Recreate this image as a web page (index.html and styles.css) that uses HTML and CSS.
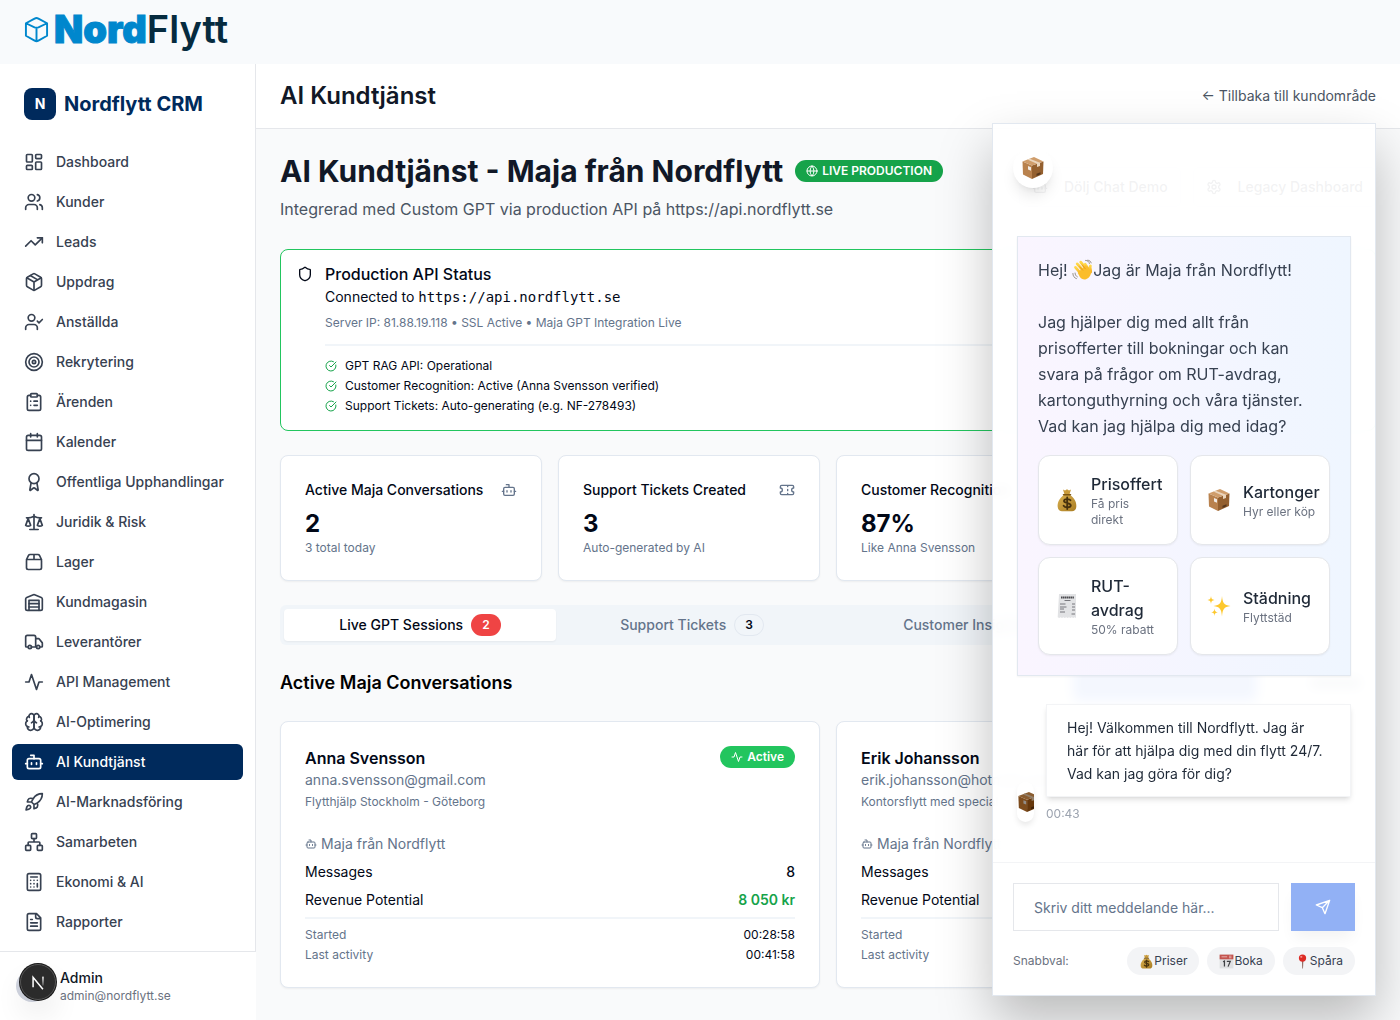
FILE: index.html
```html
<!DOCTYPE html>
<html lang="sv">
<head>
<meta charset="utf-8">
<meta name="viewport" content="width=device-width, initial-scale=1">
<title>AI Kundtjänst – Nordflytt CRM</title>
<link rel="stylesheet" href="styles.css">
</head>
<body>
<svg class="sprite" aria-hidden="true">
  <defs>
    <linearGradient id="bag" x1="0" y1="0" x2="1" y2="1"><stop offset="0" stop-color="#d9b04f"/><stop offset="1" stop-color="#a97c22"/></linearGradient>
    <linearGradient id="hand" x1="0" y1="0" x2="0" y2="1"><stop offset="0" stop-color="#ffd84a"/><stop offset="1" stop-color="#f5ab1e"/></linearGradient>
    <linearGradient id="nfade" x1="0" y1="0" x2="0" y2="1"><stop offset="0" stop-color="#fff"/><stop offset="1" stop-color="#fff" stop-opacity=".2"/></linearGradient>
    <symbol id="i-dashboard" viewBox="0 0 24 24"><rect width="7" height="9" x="3" y="3" rx="1"/><rect width="7" height="5" x="14" y="3" rx="1"/><rect width="7" height="9" x="14" y="12" rx="1"/><rect width="7" height="5" x="3" y="16" rx="1"/></symbol>
    <symbol id="i-users" viewBox="0 0 24 24"><path d="M16 21v-2a4 4 0 0 0-4-4H6a4 4 0 0 0-4 4v2"/><circle cx="9" cy="7" r="4"/><path d="M22 21v-2a4 4 0 0 0-3-3.87M16 3.13a4 4 0 0 1 0 7.75"/></symbol>
    <symbol id="i-trend" viewBox="0 0 24 24"><path d="M22 7l-8.5 8.5-5-5L2 17"/><path d="M16 7h6v6"/></symbol>
    <symbol id="i-package" viewBox="0 0 24 24"><path d="M11 21.73a2 2 0 0 0 2 0l7-4A2 2 0 0 0 21 16V8a2 2 0 0 0-1-1.73l-7-4a2 2 0 0 0-2 0l-7 4A2 2 0 0 0 3 8v8a2 2 0 0 0 1 1.73z"/><path d="M12 22V12M3.3 7l8.7 5 8.7-5M7.5 4.27l9 5.15"/></symbol>
    <symbol id="i-usercheck" viewBox="0 0 24 24"><path d="M16 21v-2a4 4 0 0 0-4-4H6a4 4 0 0 0-4 4v2"/><circle cx="9" cy="7" r="4"/><path d="M16 11l2 2 4-4"/></symbol>
    <symbol id="i-target" viewBox="0 0 24 24"><circle cx="12" cy="12" r="10"/><circle cx="12" cy="12" r="6"/><circle cx="12" cy="12" r="2"/></symbol>
    <symbol id="i-clipboard" viewBox="0 0 24 24"><rect width="8" height="4" x="8" y="2" rx="1"/><path d="M16 4h2a2 2 0 0 1 2 2v14a2 2 0 0 1-2 2H6a2 2 0 0 1-2-2V6a2 2 0 0 1 2-2h2M12 11h4M12 16h4M8 11h.01M8 16h.01"/></symbol>
    <symbol id="i-calendar" viewBox="0 0 24 24"><path d="M8 2v4M16 2v4M3 10h18"/><rect width="18" height="18" x="3" y="4" rx="2"/></symbol>
    <symbol id="i-award" viewBox="0 0 24 24"><path d="M15.477 12.89l1.515 8.526a.5.5 0 0 1-.81.47l-3.58-2.687a1 1 0 0 0-1.197 0l-3.586 2.686a.5.5 0 0 1-.81-.469l1.514-8.526"/><circle cx="12" cy="8" r="6"/></symbol>
    <symbol id="i-scale" viewBox="0 0 24 24"><path d="M16 16l3-8 3 8c-.87.65-1.92 1-3 1s-2.13-.35-3-1ZM2 16l3-8 3 8c-.87.65-1.92 1-3 1s-2.13-.35-3-1ZM7 21h10M12 3v18M3 7h2c2 0 5-1 7-2 2 1 5 2 7 2h2"/></symbol>
    <symbol id="i-box" viewBox="0 0 24 24"><path d="M3 9h18v10a2 2 0 0 1-2 2H5a2 2 0 0 1-2-2V9ZM3 9l2.45-4.9A2 2 0 0 1 7.24 3h9.52a2 2 0 0 1 1.8 1.1L21 9M12 3v6"/></symbol>
    <symbol id="i-warehouse" viewBox="0 0 24 24"><path d="M22 8.35V20a2 2 0 0 1-2 2H4a2 2 0 0 1-2-2V8.35A2 2 0 0 1 3.26 6.5l8-3.2a2 2 0 0 1 1.48 0l8 3.2A2 2 0 0 1 22 8.35ZM6 18h12M6 14h12"/><path d="M6 22V10h12v12"/></symbol>
    <symbol id="i-truck" viewBox="0 0 24 24"><path d="M14 18V6a2 2 0 0 0-2-2H4a2 2 0 0 0-2 2v11a1 1 0 0 0 1 1h2M15 18H9M19 18h2a1 1 0 0 0 1-1v-3.65a1 1 0 0 0-.22-.624l-3.48-4.35A1 1 0 0 0 17.52 8H14"/><circle cx="17" cy="18" r="2"/><circle cx="7" cy="18" r="2"/></symbol>
    <symbol id="i-activity" viewBox="0 0 24 24"><path d="M22 12h-4l-3 9L9 3l-3 9H2"/></symbol>
    <symbol id="i-brain" viewBox="0 0 24 24"><path d="M12 5a3 3 0 1 0-5.997.125 4 4 0 0 0-2.526 5.77 4 4 0 0 0 .556 6.588A4 4 0 1 0 12 18Z"/><path d="M12 5a3 3 0 1 1 5.997.125 4 4 0 0 1 2.526 5.77 4 4 0 0 1-.556 6.588A4 4 0 1 1 12 18Z"/><path d="M15 13a4.5 4.5 0 0 1-3-4 4.5 4.5 0 0 1-3 4M17.6 6.5a3 3 0 0 0 .4-1.38M6 5.13a3 3 0 0 0 .4 1.37M3.48 10.9a4 4 0 0 1 .58-.4M19.94 10.5a4 4 0 0 1 .58.4M6 18a4 4 0 0 1-1.97-.52M19.97 17.48A4 4 0 0 1 18 18"/></symbol>
    <symbol id="i-bot" viewBox="0 0 24 24"><path d="M12 8V4H8"/><rect width="16" height="12" x="4" y="8" rx="2"/><path d="M2 14h2M20 14h2M15 13v2M9 13v2"/></symbol>
    <symbol id="i-rocket" viewBox="0 0 24 24"><path d="M4.5 16.5c-1.5 1.26-2 5-2 5s3.74-.5 5-2c.71-.84.7-2.13-.09-2.91a2.18 2.18 0 0 0-2.91-.09zM12 15l-3-3a22 22 0 0 1 2-3.95A12.88 12.88 0 0 1 22 2c0 2.72-.78 7.5-6 11a22.35 22.35 0 0 1-4 2zM9 12H4s.55-3.03 2-4c1.62-1.08 5 0 5 0M12 15v5s3.03-.55 4-2c1.08-1.62 0-5 0-5"/></symbol>
    <symbol id="i-network" viewBox="0 0 24 24"><rect x="16" y="16" width="6" height="6" rx="1"/><rect x="2" y="16" width="6" height="6" rx="1"/><rect x="9" y="2" width="6" height="6" rx="1"/><path d="M5 16v-3a1 1 0 0 1 1-1h12a1 1 0 0 1 1 1v3M12 12V8"/></symbol>
    <symbol id="i-calculator" viewBox="0 0 24 24"><rect width="16" height="20" x="4" y="2" rx="2"/><path d="M8 6h8M16 14v4M16 10h.01M12 10h.01M8 10h.01M12 14h.01M8 14h.01M12 18h.01M8 18h.01"/></symbol>
    <symbol id="i-file" viewBox="0 0 24 24"><path d="M15 2H6a2 2 0 0 0-2 2v16a2 2 0 0 0 2 2h12a2 2 0 0 0 2-2V7ZM14 2v4a2 2 0 0 0 2 2h4M10 9H8M16 13H8M16 17H8"/></symbol>
    <symbol id="i-globe" viewBox="0 0 24 24"><circle cx="12" cy="12" r="10"/><path d="M12 2a14.5 14.5 0 0 0 0 20 14.5 14.5 0 0 0 0-20M2 12h20"/></symbol>
    <symbol id="i-shield" viewBox="0 0 24 24"><path d="M20 13c0 5-3.500 7.500-7.660 8.950a1 1 0 0 1-.67-.01C7.500 20.500 4 18 4 13V6a1 1 0 0 1 1-1c2 0 4.500-1.200 6.240-2.720a1.170 1.170 0 0 1 1.520 0C14.510 3.810 17 5 19 5a1 1 0 0 1 1 1z"/></symbol>
    <symbol id="i-check" viewBox="0 0 24 24"><path d="M21.801 10A10 10 0 1 1 17 3.335M9 11l3 3L22 4"/></symbol>
    <symbol id="i-ticket" viewBox="0 0 24 24"><path d="M2 9a3 3 0 0 1 0 6v2a2 2 0 0 0 2 2h16a2 2 0 0 0 2-2v-2a3 3 0 0 1 0-6V7a2 2 0 0 0-2-2H4a2 2 0 0 0-2 2ZM13 5v2M13 17v2M13 11v2"/></symbol>
    <symbol id="i-gear" viewBox="0 0 24 24"><path d="M12.220 2h-.44a2 2 0 0 0-2 2v.18a2 2 0 0 1-1 1.730l-.43.25a2 2 0 0 1-2 0l-.15-.08a2 2 0 0 0-2.730.73l-.22.38a2 2 0 0 0 .73 2.730l.15.1a2 2 0 0 1 1 1.720v.51a2 2 0 0 1-1 1.740l-.15.09a2 2 0 0 0-.73 2.730l.22.38a2 2 0 0 0 2.730.73l.15-.08a2 2 0 0 1 2 0l.43.25a2 2 0 0 1 1 1.730V20a2 2 0 0 0 2 2h.44a2 2 0 0 0 2-2v-.18a2 2 0 0 1 1-1.730l.43-.25a2 2 0 0 1 2 0l.15.08a2 2 0 0 0 2.730-.73l.22-.39a2 2 0 0 0-.73-2.730l-.15-.08a2 2 0 0 1-1-1.740v-.5a2 2 0 0 1 1-1.740l.15-.09a2 2 0 0 0 .73-2.730l-.22-.38a2 2 0 0 0-2.730-.73l-.15.08a2 2 0 0 1-2 0l-.43-.25a2 2 0 0 1-1-1.730V4a2 2 0 0 0-2-2z"/><circle cx="12" cy="12" r="3"/></symbol>
    <symbol id="i-send" viewBox="0 0 24 24"><path d="M22 2L2 9l9 4 4 9ZM22 2L11 13"/></symbol>
    <symbol id="e-box" viewBox="0 0 24 24"><path d="M1.500 5.500L11 9.500V23L2 18.500Z" fill="#b9824e"/><path d="M11 9.500L22.500 5.500 22 18 11 23Z" fill="#94602f"/><path d="M1.500 5.500L13 1l9.500 4.500L11 9.500Z" fill="#cf9d6b"/><path d="M6.300 3.600L8.700 2.700 19 6.700V10l-3 1V7.800Z" fill="#ead5bd"/><path d="M7 10l3 1.200v3.600L7 13.500Z" fill="#f1ece6"/><path d="M15.500 17.800l4-1.500v2l-4 1.600Z" fill="#56371c"/></symbol>
    <symbol id="e-bag" viewBox="0 0 24 24"><path d="M8 1.500l2 1 2-1.300 2 1.300 2-1-1.500 5h-5Z" fill="#c99b3b"/><path d="M9 7h6c5 3.500 6.800 8 6.300 12-.3 3-2.300 4.200-4.300 4.200H7c-2 0-4-1.200-4.300-4.200C2.200 15 4 10.500 9 7Z" fill="url(#bag)"/><path d="M8.500 6.800h7" stroke="#7a5413" stroke-width="1.500" stroke-linecap="round"/><path d="M15.500 12.300c-1-1.600-6.500-2-6.500.7 0 2.500 6.800 1.500 6.800 4.300 0 2.700-5.800 2.700-7.200.5M12.200 9.500v11.500" fill="none" stroke="#46310d" stroke-width="1.800" stroke-linecap="round"/></symbol>
    <symbol id="e-receipt" viewBox="0 0 24 24"><path d="M4 0h17v24l-1.400-.7-1.400.7-1.400-.7-1.400.7-1.400-.7-1.400.7-1.400-.7-1.400.7-1.400-.7-1.400.7-1.400-.7-1.400.7-1.500-.7Z" fill="#e2e3e5"/><path d="M6 3.500h13" stroke="#4b4b4f" stroke-width="2" stroke-dasharray="1.500 .4"/><path d="M9.500 6.500h6M5 10h5.500M17 10h3M5 13h6.500M17 13h3M5 15h4M17 16h3M5 18h5M16.500 20h3.500" stroke="#77777c" stroke-width="1"/></symbol>
    <symbol id="e-spark" viewBox="0 0 24 24"><path d="M15 2c.7 7 1.700 8.800 8.500 10-6.800 1.200-7.800 3-8.500 10.500-.7-7.500-1.700-9.300-8.500-10.500 6.800-1.200 7.800-3 8.500-10ZM4 2c.3 2.800 1 3.600 3.500 4C5 6.400 4.300 7.200 4 10 3.700 7.200 3 6.400.5 6 3 5.600 3.700 4.800 4 2ZM7.500 14.500c.3 2.700 1 3.400 3.300 3.800-2.300.4-3 1.100-3.300 3.800-.3-2.700-1-3.400-3.300-3.800 2.300-.4 3-1.100 3.300-3.800Z" fill="#fdc82e"/></symbol>
    <symbol id="e-wave" viewBox="0 0 24 24"><g fill="none" stroke="url(#hand)" stroke-width="3.200" stroke-linecap="round"><path d="M4 9l7 8"/><path d="M6 5l8 9"/><path d="M10 3l7 9"/><path d="M15 5.500l4 6"/><path d="M21 7.500c-1 2 .8 5 .2 7"/></g><path d="M6.500 15l9-8.500 5.500 6c2 3-.5 8.500-5 10-3 .8-5.500-.5-7-2.500Z" fill="#fbbd2b"/><path d="M8.500 8l4 4.500M11.500 6l4 5" stroke="#d98b12" stroke-width=".7"/><path d="M1 15.500c0 3.500 1.500 5.500 4.500 6.500M3.500 15c0 2.500 1 4 3 5M15 1c3 0 4.500 1.500 5 4M17.500.8c2.500 0 4 1.500 4.500 3.500" fill="none" stroke="#8a8378" stroke-width="1"/></symbol>
    <symbol id="e-cal" viewBox="0 0 24 24"><path d="M1 1h22v22H1Z" fill="#dfe0e2"/><path d="M1 1h22v7.500H1Z" fill="#c4544f"/><path d="M4 4.500h9M16 3.500h4M16 6h4" stroke="#eec4c1" stroke-width="1.300"/><path d="M6.500 12.500l2.200-1.200V20M12.500 11.800h5.500l-3.500 8.400" fill="none" stroke="#3f4144" stroke-width="2"/></symbol>
    <symbol id="e-pin" viewBox="0 0 24 24"><path d="M11 10h2.400l-.6 13h-1.200Z" fill="#936b62"/><circle cx="12" cy="6.500" r="5.800" fill="#dd2b25"/><ellipse cx="10" cy="4.500" rx="1.800" ry="1.400" fill="#f69a92"/></symbol>
  </defs>
</svg>

<header class="brandbar">
  <a class="brand" href="#" aria-label="NordFlytt">
    <svg class="brand-cube" viewBox="0 0 26 28" aria-hidden="true"><path d="M2 7.500L11 2.600Q13 1.600 15 2.600L24 7.500V20.500L15 25.600Q13 26.700 11 25.600L2 20.500ZM2 7.500L11 11.800Q13 12.600 15 11.800L24 7.500M13 12.500V26"/></svg>
    <span class="brand-nord">Nord</span><span class="brand-flytt">Flytt</span>
  </a>
</header>

<div class="shell">
  <aside class="sidebar">
    <div class="side-main">
      <div class="side-head"><span class="side-logo">N</span><span class="side-title">Nordflytt CRM</span></div>
      <nav class="side-nav">
        <a href="#"><svg class="icon"><use href="#i-dashboard"/></svg>Dashboard</a>
        <a href="#"><svg class="icon"><use href="#i-users"/></svg>Kunder</a>
        <a href="#"><svg class="icon"><use href="#i-trend"/></svg>Leads</a>
        <a href="#"><svg class="icon"><use href="#i-package"/></svg>Uppdrag</a>
        <a href="#"><svg class="icon"><use href="#i-usercheck"/></svg>Anställda</a>
        <a href="#"><svg class="icon"><use href="#i-target"/></svg>Rekrytering</a>
        <a href="#"><svg class="icon"><use href="#i-clipboard"/></svg>Ärenden</a>
        <a href="#"><svg class="icon"><use href="#i-calendar"/></svg>Kalender</a>
        <a href="#"><svg class="icon"><use href="#i-award"/></svg>Offentliga Upphandlingar</a>
        <a href="#"><svg class="icon"><use href="#i-scale"/></svg>Juridik &amp; Risk</a>
        <a href="#"><svg class="icon"><use href="#i-box"/></svg>Lager</a>
        <a href="#"><svg class="icon"><use href="#i-warehouse"/></svg>Kundmagasin</a>
        <a href="#"><svg class="icon"><use href="#i-truck"/></svg>Leverantörer</a>
        <a href="#"><svg class="icon"><use href="#i-activity"/></svg>API Management</a>
        <a href="#"><svg class="icon"><use href="#i-brain"/></svg>AI-Optimering</a>
        <a href="#" class="current" aria-current="page"><svg class="icon"><use href="#i-bot"/></svg>AI Kundtjänst</a>
        <a href="#"><svg class="icon"><use href="#i-rocket"/></svg>AI-Marknadsföring</a>
        <a href="#"><svg class="icon"><use href="#i-network"/></svg>Samarbeten</a>
        <a href="#"><svg class="icon"><use href="#i-calculator"/></svg>Ekonomi &amp; AI</a>
        <a href="#"><svg class="icon"><use href="#i-file"/></svg>Rapporter</a>
      </nav>
    </div>
    <div class="side-user">
      <span class="avatar"></span>
      <div class="user-text"><div class="user-name">Admin</div><div class="user-mail">admin@nordflytt.se</div></div>
    </div>
  </aside>

  <main class="main">
    <header class="topbar">
      <div class="topbar-title">AI Kundtjänst</div>
      <a class="back" href="#">← Tillbaka till kundområde</a>
    </header>

    <div class="content">
      <div class="page-head">
        <div>
          <div class="title-row">
            <h1>AI Kundtjänst - Maja från Nordflytt</h1>
            <span class="badge badge-live"><svg class="icon icon-xs"><use href="#i-globe"/></svg>LIVE PRODUCTION</span>
          </div>
          <p class="subtitle">Integrerad med Custom GPT via production API på https://api.nordflytt.se</p>
        </div>
        <div class="head-actions">
          <button class="btn" type="button"><svg class="icon icon-sm"><use href="#i-bot"/></svg>Dölj Chat Demo</button>
          <button class="btn" type="button"><svg class="icon icon-sm"><use href="#i-gear"/></svg>Legacy Dashboard</button>
        </div>
      </div>

      <section class="alert">
        <svg class="icon icon-sm"><use href="#i-shield"/></svg>
        <div class="alert-body">
          <h2 class="alert-title">Production API Status</h2>
          <p class="alert-conn">Connected to <code>https://api.nordflytt.se</code></p>
          <p class="alert-meta">Server IP: 81.88.19.118 • SSL Active • Maja GPT Integration Live</p>
          <ul class="checks">
            <li><svg class="icon icon-xs"><use href="#i-check"/></svg>GPT RAG API: Operational</li>
            <li><svg class="icon icon-xs"><use href="#i-check"/></svg>Customer Recognition: Active (Anna Svensson verified)</li>
            <li><svg class="icon icon-xs"><use href="#i-check"/></svg>Support Tickets: Auto-generating (e.g. NF-278493)</li>
          </ul>
        </div>
      </section>

      <section class="stats">
        <article class="card">
          <div class="stat-head"><h3>Active Maja Conversations</h3><svg class="icon icon-sm"><use href="#i-bot"/></svg></div>
          <div class="stat-value">2</div><div class="stat-note">3 total today</div>
        </article>
        <article class="card">
          <div class="stat-head"><h3>Support Tickets Created</h3><svg class="icon icon-sm"><use href="#i-ticket"/></svg></div>
          <div class="stat-value">3</div><div class="stat-note">Auto-generated by AI</div>
        </article>
        <article class="card">
          <div class="stat-head"><h3>Customer Recognition</h3></div>
          <div class="stat-value">87%</div><div class="stat-note">Like Anna Svensson</div>
        </article>
      </section>

      <div class="tabs" role="tablist">
        <button class="tab active" type="button" role="tab" aria-selected="true">Live GPT Sessions<span class="badge badge-red">2</span></button>
        <button class="tab" type="button" role="tab" aria-selected="false">Support Tickets<span class="badge badge-outline">3</span></button>
        <button class="tab" type="button" role="tab" aria-selected="false">Customer Insights</button>
      </div>

      <div class="section-head">
        <h2>Active Maja Conversations</h2>
        <div class="section-fills" aria-hidden="true"><span class="primary-fill"></span><span class="muted-fill"></span></div>
      </div>

      <section class="conversations">
        <article class="card">
          <div class="conv-head">
            <div>
              <h3 class="conv-name">Anna Svensson</h3>
              <div class="conv-mail">anna.svensson@gmail.com</div>
              <div class="conv-topic">Flytthjälp Stockholm - Göteborg</div>
            </div>
            <span class="badge badge-active"><svg class="icon icon-xs"><use href="#i-activity"/></svg>Active</span>
          </div>
          <div class="conv-agent"><svg class="icon icon-xs"><use href="#i-bot"/></svg>Maja från Nordflytt</div>
          <dl class="facts"><div><dt>Messages</dt><dd>8</dd></div><div><dt>Revenue Potential</dt><dd class="money">8 050 kr</dd></div></dl>
          <dl class="times"><div><dt>Started</dt><dd>00:28:58</dd></div><div><dt>Last activity</dt><dd>00:41:58</dd></div></dl>
        </article>
        <article class="card">
          <div class="conv-head">
            <div>
              <h3 class="conv-name">Erik Johansson</h3>
              <div class="conv-mail">erik.johansson@hotmail.com</div>
              <div class="conv-topic">Kontorsflytt med special</div>
            </div>
          </div>
          <div class="conv-agent"><svg class="icon icon-xs"><use href="#i-bot"/></svg>Maja från Nordflytt</div>
          <dl class="facts"><div><dt>Messages</dt><dd></dd></div><div><dt>Revenue Potential</dt><dd></dd></div></dl>
          <dl class="times"><div><dt>Started</dt><dd></dd></div><div><dt>Last activity</dt><dd></dd></div></dl>
        </article>
      </section>
    </div>
  </main>
</div>

<section class="chat" aria-label="Maja chatt">
  <header class="chat-head"><span class="chat-avatar"><svg class="emoji"><use href="#e-box"/></svg></span></header>
  <div class="chat-body">
    <div class="welcome">
      <p>Hej! <svg class="emoji emoji-inline"><use href="#e-wave"/></svg>Jag är Maja från Nordflytt!</p>
      <p>Jag hjälper dig med allt från prisofferter till bokningar och kan svara på frågor om RUT-avdrag, kartonguthyrning och våra tjänster. Vad kan jag hjälpa dig med idag?</p>
      <div class="quick">
        <button type="button"><svg class="emoji"><use href="#e-bag"/></svg><span class="quick-text"><b>Prisoffert</b><small>Få pris direkt</small></span></button>
        <button type="button"><svg class="emoji"><use href="#e-box"/></svg><span class="quick-text"><b>Kartonger</b><small>Hyr eller köp</small></span></button>
        <button type="button"><svg class="emoji"><use href="#e-receipt"/></svg><span class="quick-text"><b>RUT-avdrag</b><small>50% rabatt</small></span></button>
        <button type="button"><svg class="emoji"><use href="#e-spark"/></svg><span class="quick-text"><b>Städning</b><small>Flyttstäd</small></span></button>
      </div>
    </div>
    <div class="message">
      <span class="mini-avatar"><svg class="emoji"><use href="#e-box"/></svg></span>
      <div class="message-col">
        <div class="bubble">Hej! Välkommen till Nordflytt. Jag är här för att hjälpa dig med din flytt 24/7. Vad kan jag göra för dig?</div>
        <time>00:43</time>
      </div>
    </div>
  </div>
  <footer class="chat-foot">
    <form class="compose">
      <input type="text" aria-label="Meddelande" placeholder="Skriv ditt meddelande här...">
      <button type="button" aria-label="Skicka"><svg class="icon icon-sm"><use href="#i-send"/></svg></button>
    </form>
    <div class="shortcuts">
      <span class="shortcuts-label">Snabbval:</span>
      <button type="button"><svg class="emoji"><use href="#e-bag"/></svg>Priser</button>
      <button type="button"><svg class="emoji"><use href="#e-cal"/></svg>Boka</button>
      <button type="button"><svg class="emoji"><use href="#e-pin"/></svg>Spåra</button>
    </div>
  </footer>
</section>

<button class="dev-badge" type="button" aria-label="Utvecklarverktyg"><svg viewBox="0 0 38 38" aria-hidden="true"><path d="M13.500 25V13.800L24.500 27" fill="none" stroke="#fff" stroke-width="1.700"/><rect x="23.700" y="13" width="1.700" height="10" fill="url(#nfade)"/></svg></button>
</body>
</html>
```
FILE: styles.css
```css
*, *::before, *::after { box-sizing: border-box; }
body {
  margin: 0;
  min-height: 100vh;
  display: flex;
  flex-direction: column;
  font-family: Inter, "Liberation Sans", sans-serif;
  font-size: 14px;
  line-height: 20px;
  color: #020817;
  background: #f9fafb;
}
h1, h2, h3, p, ul, dl, dd { margin: 0; padding: 0; }
a { color: inherit; text-decoration: none; }
button, input { font: inherit; color: inherit; }
button { cursor: pointer; }
.sprite { position: absolute; width: 0; height: 0; }

.icon {
  width: 20px;
  height: 20px;
  flex: none;
  fill: none;
  stroke: currentColor;
  stroke-width: 2;
  stroke-linecap: round;
  stroke-linejoin: round;
}
.icon-sm { width: 16px; height: 16px; }
.icon-xs { width: 12px; height: 12px; }
.emoji { width: 24px; height: 24px; flex: none; }

/* Brand bar */
.brandbar { height: 64px; padding: 0 24px; background: #f8fafc; }
.brand { display: flex; align-items: center; height: 58px; line-height: 40px; }
.brand-cube { width: 25px; height: 27px; margin-right: 5px; fill: none; stroke: #0087cd; stroke-width: 2; stroke-linejoin: round; }
.brand-nord { font-size: 38px; font-weight: 900; color: #0087cd; -webkit-text-stroke: 1px #0087cd; }
.brand-flytt { font-size: 38px; font-weight: 600; color: #062b3f; }

.shell { display: flex; flex: 1; }

/* Sidebar */
.sidebar { width: 256px; flex: none; display: flex; flex-direction: column; background: #fff; }
.side-main { flex: 1; border-right: 1px solid #e5e7eb; }
.side-head { display: flex; align-items: center; gap: 8px; padding: 24px; }
.side-logo {
  width: 32px; height: 32px; border-radius: 8px;
  display: grid; place-items: center;
  background: #002a5c; color: #fff; font-weight: 700;
}
.side-title { font-size: 20px; line-height: 28px; font-weight: 700; color: #002a5c; }
.side-nav { display: flex; flex-direction: column; gap: 4px; padding: 0 12px 11px; }
.side-nav a {
  display: flex; align-items: center; gap: 12px;
  height: 36px; padding: 0 12px; border-radius: 6px;
  font-weight: 500; color: #374151;
}
.side-nav .current { background: #002a5c; color: #fff; }
.side-user { display: flex; align-items: center; gap: 12px; padding: 16px; border-top: 1px solid #e5e7eb; }
.avatar { width: 32px; height: 32px; border-radius: 50%; background: #d1d5e0; }
.user-name { font-weight: 500; color: #111827; }
.user-mail { font-size: 12px; line-height: 16px; color: #6b7280; }

/* Main column */
.main { flex: 1; min-width: 0; }
.topbar {
  display: flex; align-items: center; justify-content: space-between;
  height: 65px; padding: 0 24px;
  background: #fff; border-bottom: 1px solid #e5e7eb;
}
.topbar-title { font-size: 24px; line-height: 32px; font-weight: 600; color: #111827; }
.back { color: #4b5563; }
.content { padding: 24px; }

.page-head { display: flex; align-items: center; justify-content: space-between; margin-bottom: 28px; white-space: nowrap; }
.title-row { display: flex; align-items: center; gap: 12px; }
h1 { font-size: 30px; line-height: 36px; font-weight: 700; color: #111827; }
.subtitle { margin-top: 8px; font-size: 16px; line-height: 24px; color: #4b5563; }
.head-actions { display: flex; gap: 12px; }
.btn {
  display: flex; align-items: center; gap: 16px;
  height: 40px; padding: 0 12px;
  border: 1px solid #e2e8f0; border-radius: 6px; background: #fff; font-weight: 500;
}

.badge {
  display: inline-flex; align-items: center; gap: 4px;
  height: 22px; padding: 0 11px; border-radius: 11px;
  font-size: 12px; line-height: 16px; font-weight: 600; color: #fff; white-space: nowrap;
}
.badge-live { background: #16a34a; }
.badge-active { background: #22c55e; }
.badge-red { background: #ef4444; }
.badge-outline { padding: 0 10px; border: 1px solid #e2e8f0; color: #020817; }

.alert {
  display: flex; gap: 12px; padding: 16px;
  background: #fff; border: 1px solid #22c55e; border-radius: 8px;
}
.alert-body { flex: 1; }
.alert-title { font-size: 16px; line-height: 16px; font-weight: 500; }
.alert-conn { margin-top: 4px; line-height: 22px; }
.alert-conn code { font-family: "DejaVu Sans Mono", monospace; font-size: 14px; }
.alert-meta { margin-top: 7px; font-size: 12px; line-height: 16px; color: #64748b; }
.checks {
  display: flex; flex-direction: column; gap: 4px;
  margin-top: 13px; padding-top: 12px; border-top: 2px solid #f1f5f9;
  list-style: none; font-size: 12px; line-height: 16px;
}
.checks li { display: flex; align-items: center; gap: 8px; }
.checks .icon { color: #16a34a; }

.card {
  padding: 24px; background: #fff;
  border: 1px solid #e2e8f0; border-radius: 8px;
  box-shadow: 0 1px 2px rgba(0, 0, 0, .05);
}
.stats { display: grid; grid-template-columns: repeat(4, 1fr); gap: 16px; margin-top: 24px; }
.stat-head { display: flex; align-items: center; justify-content: space-between; white-space: nowrap; }
.stat-head h3 { font-size: 14px; line-height: 20px; font-weight: 500; }
.stat-head .icon { color: #64748b; }
.stat-value { margin-top: 8px; font-size: 24px; line-height: 32px; font-weight: 700; }
.stat-note { font-size: 12px; line-height: 16px; color: #64748b; }

.tabs {
  display: grid; grid-template-columns: repeat(4, 1fr);
  height: 40px; margin-top: 24px; padding: 4px;
  background: #f1f5f9; border-radius: 6px;
}
.tab {
  display: flex; align-items: center; justify-content: center; gap: 8px;
  padding: 0; border: 0; border-radius: 4px; background: none;
  font-weight: 500; color: #64748b; white-space: nowrap;
}
.tab.active { background: #fff; color: #020817; box-shadow: 0 1px 2px rgba(0, 0, 0, .05); }

.section-head { display: flex; align-items: center; justify-content: space-between; height: 40px; margin: 18px 0; }
.section-head h2 { font-size: 18px; line-height: 28px; font-weight: 600; color: #000; }
.section-fills { display: flex; align-items: center; gap: 54px; padding-right: 16px; }
.primary-fill { width: 184px; height: 36px; border-radius: 6px; background: #2563eb; }
.muted-fill { width: 49px; height: 8px; background: #64748b; }

.conversations { display: grid; grid-template-columns: 1fr 1fr; gap: 16px; }
.conv-head { display: flex; align-items: flex-start; justify-content: space-between; }
.conv-name { font-size: 16px; line-height: 24px; font-weight: 600; }
.conv-mail { color: #64748b; }
.conv-topic { margin-top: 4px; font-size: 12px; line-height: 16px; color: #64748b; }
.conv-agent { display: flex; align-items: center; gap: 4px; margin-top: 24px; color: #64748b; }
.facts div, .times div { display: flex; justify-content: space-between; }
.facts div { margin-top: 8px; }
.facts dd { font-weight: 500; }
.facts .money { color: #16a34a; font-weight: 600; }
.times {
  display: flex; flex-direction: column; gap: 4px;
  margin-top: 7px; padding-top: 8px; border-top: 2px solid #f1f5f9;
  font-size: 12px; line-height: 16px;
}
.times dt { color: #64748b; }

/* Floating chat */
.chat {
  position: fixed; right: 24px; bottom: 24px; width: 384px;
  border: 1px solid #e2e8f0;
  box-shadow: 0 25px 50px rgba(0, 0, 0, .25);
}
.chat-head { height: 88px; padding: 24px 20px; background: rgba(255, 255, 255, .95); }
.chat-avatar {
  display: grid; place-items: center; width: 40px; height: 40px;
  border-radius: 50%; background: #fff;
  box-shadow: 0 10px 15px -3px rgba(0, 0, 0, .1), 0 4px 6px -4px rgba(0, 0, 0, .1);
}
.chat-body { padding: 24px 24px 40px; background: rgba(255, 255, 255, .95); backdrop-filter: blur(6px); }
.welcome {
  padding: 20px; border: 1px solid #e2e8f0;
  background: linear-gradient(to right, #faf5ff, #eff6ff);
  box-shadow: 0 1px 2px rgba(0, 0, 0, .05);
  font-size: 16px; line-height: 26px; color: #374151;
}
.welcome p + p { margin-top: 26px; }
.emoji-inline { width: 21px; height: 22px; vertical-align: -5px; }
.quick { display: grid; grid-template-columns: 1fr 1fr; gap: 12px; margin-top: 16px; }
.quick button {
  display: flex; align-items: center; gap: 12px; min-width: 0; padding: 16px;
  border: 1px solid #e5e7eb; border-radius: 12px; background: #fff;
  box-shadow: 0 1px 2px rgba(0, 0, 0, .05); text-align: left;
}
.quick b { display: block; font-size: 16px; line-height: 24px; font-weight: 500; color: #1f2937; }
.quick small { display: block; font-size: 12px; line-height: 16px; color: #6b7280; }

.message { display: flex; align-items: flex-end; gap: 12px; margin-top: 28px; }
.mini-avatar {
  display: flex; align-items: center; width: 17px; height: 40px; overflow: hidden;
  border-radius: 9px; background: #fff; box-shadow: 0 4px 6px -1px rgba(0, 0, 0, .1);
}
.mini-avatar .emoji { width: 22px; height: 22px; filter: brightness(.6) saturate(1.5); }
.message-col { flex: 1; min-width: 0; }
.bubble {
  padding: 11px 24px 11px 20px; line-height: 23px; color: #1f2937; background: #fff;
  border: 1px solid #f3f4f6; box-shadow: 0 4px 6px -1px rgba(0, 0, 0, .1), 0 2px 4px -2px rgba(0, 0, 0, .1);
}
.message time { display: block; margin-top: 9px; font-size: 12px; line-height: 16px; color: #9ca3af; }

.chat-foot { padding: 20px; border-top: 1px solid #f3f4f6; background: #fff; }
.compose { display: flex; gap: 12px; }
.compose input { flex: 1; min-width: 0; height: 48px; padding: 0 20px; border: 1px solid #e5e7eb; background: #fff; }
.compose input::placeholder { color: #64748b; opacity: 1; }
.compose button {
  display: grid; place-items: center; width: 64px; height: 48px; padding: 0; border: 0;
  background: #92b1f5; color: #fff; box-shadow: 0 10px 15px -3px rgba(0, 0, 0, .05);
}
.shortcuts { display: flex; align-items: center; gap: 8px; margin-top: 16px; font-size: 12px; line-height: 16px; }
.shortcuts-label { flex: 1; color: #6b7280; }
.shortcuts button {
  display: flex; align-items: center; height: 28px; padding: 0 12px;
  border: 0; border-radius: 14px; background: #f3f4f6; color: #374151;
}
.shortcuts .emoji { width: 15px; height: 15px; }

.dev-badge {
  position: fixed; left: 20px; bottom: 20px; width: 36px; height: 36px; padding: 0;
  border: 1px solid #555; border-radius: 50%; background: #2b2b2b;
  box-shadow: 0 0 0 1px #171717, 0 16px 32px -8px rgba(0, 0, 0, .24);
}
.dev-badge svg { display: block; width: 34px; height: 34px; }
```
